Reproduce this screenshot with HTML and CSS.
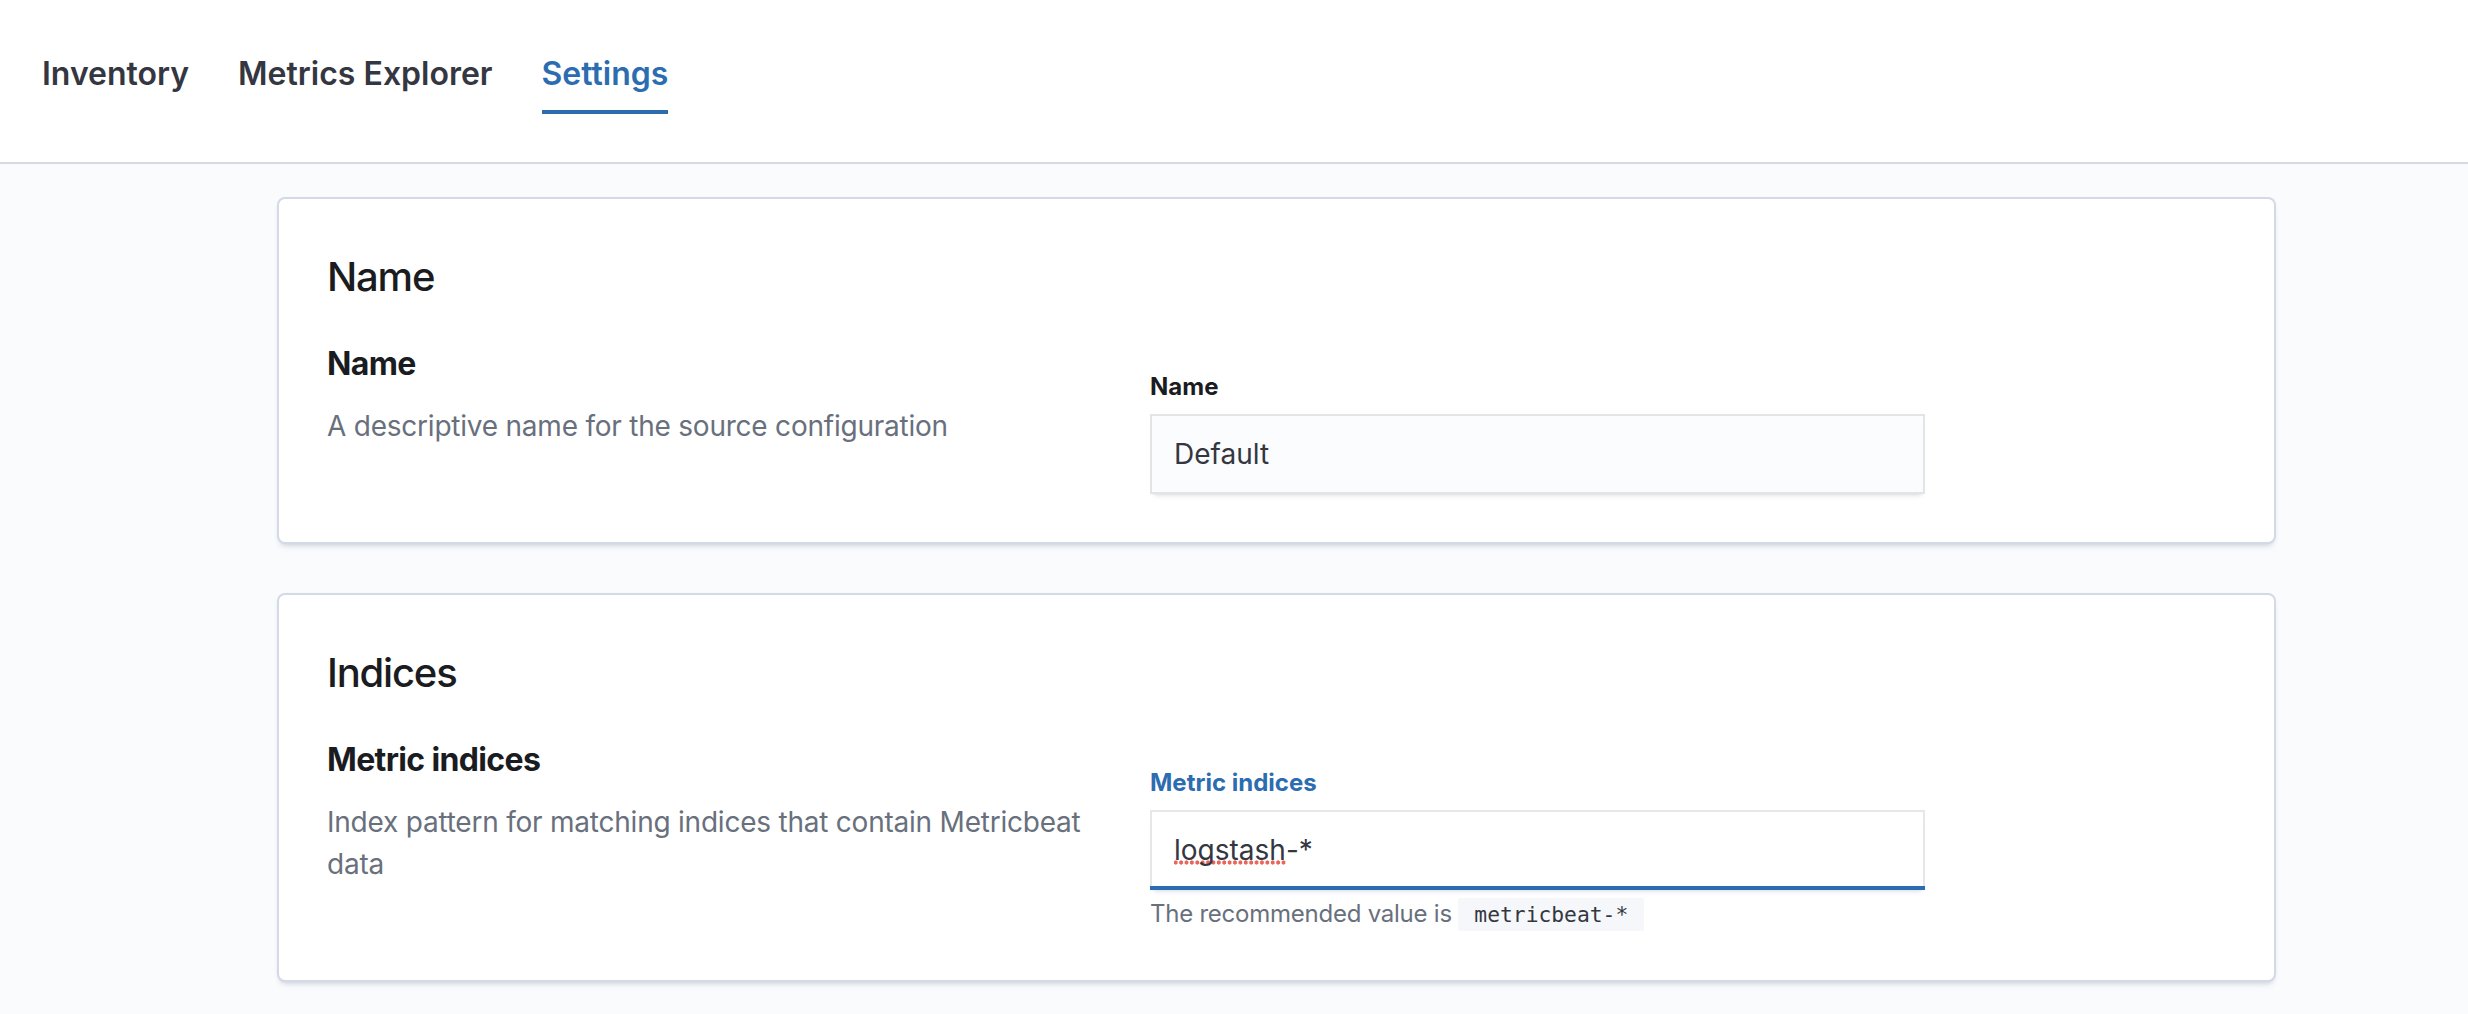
FILE: index.html
```html
<!DOCTYPE html>
<html lang="en">
<head>
<meta charset="utf-8">
<title>Settings</title>
<link rel="stylesheet" href="styles.css">
</head>
<body>
<header class="tabs-bar">
  <nav class="tabs">
    <span class="tab">Inventory</span>
    <span class="tab">Metrics Explorer</span>
    <span class="tab tab-active">Settings</span>
  </nav>
</header>
<main class="page">
  <section class="panel">
    <h2 class="panel-title">Name</h2>
    <div class="described-row">
      <div class="desc">
        <h3 class="desc-title">Name</h3>
        <p class="desc-text">A descriptive name for the source configuration</p>
      </div>
      <div class="field">
        <label class="field-label">Name</label>
        <div class="text-input">Default</div>
      </div>
    </div>
  </section>
  <section class="panel">
    <h2 class="panel-title">Indices</h2>
    <div class="described-row">
      <div class="desc">
        <h3 class="desc-title">Metric indices</h3>
        <p class="desc-text">Index pattern for matching indices that contain Metricbeat data</p>
      </div>
      <div class="field">
        <label class="field-label field-label-focus">Metric indices</label>
        <div class="text-input text-input-focus"><span class="misspelled">logstash</span>-*</div>
        <div class="help-text">The recommended value is <code class="code">metricbeat-*</code></div>
      </div>
    </div>
  </section>
</main>
</body>
</html>
```

FILE: styles.css
```css
html, body {
  margin: 0;
  padding: 0;
}
body {
  font-family: Inter, "Noto Sans", "Liberation Sans", sans-serif;
  background: #FAFBFD;
  color: #343741;
  width: 2468px;
  min-height: 1014px;
}
.tabs-bar {
  height: 164px;
  box-sizing: border-box;
  background: #FFFFFF;
  border-bottom: 2px solid #D3DAE6;
  padding: 50px 0 0 42px;
}
.tabs {
  display: flex;
  gap: 49px;
  align-items: flex-start;
}
.tab {
  font-size: 32px;
  line-height: 48px;
  font-weight: 600;
  color: #343741;
  padding-bottom: 12px;
  border-bottom: 4px solid transparent;
}
.tab-active {
  color: #2C6CB0;
  border-bottom-color: #2C6CB0;
}
.page {
  padding: 33px 0 40px 277px;
  display: flex;
  flex-direction: column;
  gap: 49px;
}
.panel {
  width: 1999px;
  box-sizing: border-box;
  background: #FFFFFF;
  border: 2px solid #D3DAE6;
  border-radius: 8px;
  padding: 48px;
  box-shadow: 0 2px 4px -2px rgba(152,162,179,.35), 0 6px 6px -4px rgba(152,162,179,.3);
}
.panel-title {
  margin: 0;
  font-size: 40px;
  line-height: 60px;
  font-weight: 500;
  letter-spacing: -0.03em;
  color: #1A1C21;
}
.described-row {
  margin-top: 33px;
  display: grid;
  grid-template-columns: 775px 775px;
  column-gap: 48px;
}
.desc-title {
  margin: 0;
  font-size: 32px;
  line-height: 48px;
  font-weight: 700;
  letter-spacing: -0.02em;
  color: #1A1C21;
}
.desc-text {
  margin: 17px 0 0;
  font-size: 28px;
  line-height: 42px;
  letter-spacing: -0.008em;
  color: #69707D;
}
.field {
  padding-top: 29px;
  display: flex;
  flex-direction: column;
}
.field-label {
  font-size: 24px;
  line-height: 36px;
  font-weight: 700;
  color: #1A1C21;
}
.field-label-focus {
  color: #2C6CB0;
}
.text-input {
  margin-top: 9px;
  height: 80px;
  box-sizing: border-box;
  padding: 0 24px;
  display: flex;
  align-items: center;
  font-size: 28px;
  color: #343741;
  background: #FBFCFD;
  box-shadow: inset 0 0 0 2px rgba(16,22,26,.1), 0 2px 2px -2px rgba(152,162,179,.25), 0 6px 4px -4px rgba(152,162,179,.25);
}
.text-input-focus {
  background: #FFFFFF;
  box-shadow: inset 0 -4px 0 0 #2C6CB0, inset 0 0 0 2px rgba(16,22,26,.1), 0 2px 2px -2px rgba(152,162,179,.25), 0 6px 4px -4px rgba(152,162,179,.25);
}
.misspelled {
  background-image: radial-gradient(circle, #E8675C 1.9px, transparent 2.3px);
  background-size: 5.4px 5px;
  background-repeat: repeat-x;
  background-position: -1px calc(100% - 2px);
}
.help-text {
  margin-top: 6px;
  font-size: 24px;
  line-height: 36px;
  letter-spacing: -0.01em;
  color: #69707D;
}
.code {
  display: inline-block;
  padding: 0 16px;
  height: 33px;
  line-height: 33px;
  font-family: "DejaVu Sans Mono", "Liberation Mono", monospace;
  font-size: 21.3px;
  letter-spacing: 0;
  color: #343741;
  background: #F5F7FA;
  border-radius: 2px;
}
```
